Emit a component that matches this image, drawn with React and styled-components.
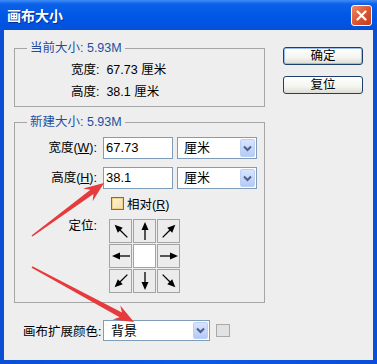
import React from 'react';
import styled, { createGlobalStyle } from 'styled-components';

const GlobalStyle = createGlobalStyle`
  body {
    margin: 0;
    background: #fff;
    font-family: "Liberation Sans", "Noto Sans CJK SC", sans-serif;
    font-size: 12px;
    color: #000;
  }
`;

const Window = styled.div`
  position: relative;
  width: 377px;
  height: 364px;
  display: flex;
  flex-direction: column;
  background: linear-gradient(90deg, #0a4fd6, #0b5ae6 50%, #0a4fd6);
  overflow: hidden;
`;

const TitleBar = styled.div`
  height: 30px;
  flex: none;
  display: flex;
  align-items: center;
  justify-content: space-between;
  padding: 0 5px 0 7px;
  background: linear-gradient(#3f8cf8 0, #0c61e8 4px, #0058e6 50%, #0251dc 100%);
`;

const Title = styled.span`
  font-family: "Noto Sans CJK SC", sans-serif;
  font-weight: bold;
  font-size: 14px;
  color: #fff;
  text-shadow: 1px 1px 0 #0a2a8c;
`;

const CloseButton = styled.div`
  width: 21px;
  height: 21px;
  box-sizing: border-box;
  border: 1px solid #fff;
  border-radius: 3px;
  background: linear-gradient(135deg, #f08a68, #d8532e 55%, #c0401e);
  display: flex;
  align-items: center;
  justify-content: center;
`;

const Body = styled.div`
  flex: 1;
  margin: 0 4px 4px;
  background: #eeeeee;
  display: grid;
  grid-template-columns: 251px 80px;
  column-gap: 18px;
  align-items: start;
  padding: 11px 10px 0;
`;

const Main = styled.div`
  display: flex;
  flex-direction: column;
`;

const Group = styled.fieldset`
  margin: 0 0 ${p => p.$gap || 0}px;
  padding: 0;
  border: 1px solid #a5a5a5;
  min-inline-size: 0;
`;

const Legend = styled.legend`
  margin-left: 12px;
  padding: 0 3px;
  line-height: 14px;
  font-size: 12.5px;
  color: #1f4e9e;
`;

const Info = styled.div`
  padding: 4px 0 3px 56px;
  line-height: 22px;
  font-size: 12.5px;
`;

const Form = styled.div`
  display: grid;
  grid-template-columns: 84px 70px 80px;
  column-gap: 4px;
  row-gap: 8px;
  padding: 8px 7px 9px 0;
`;

const FieldLabel = styled.label`
  text-align: right;
  padding-right: 2px;
  font-size: 12.5px;
  line-height: ${p => (p.$top ? '14px' : '22px')};
  align-self: ${p => (p.$top ? 'start' : 'center')};
  margin-top: ${p => (p.$top ? '1px' : '0')};
`;

const TextInput = styled.div`
  height: 22px;
  box-sizing: border-box;
  border: 1px solid #7f9db9;
  background: #fff;
  padding: 0 2px;
  font-size: 13px;
  line-height: 20px;
`;

const Select = styled.div`
  height: ${p => p.$h || 22}px;
  width: ${p => (p.$w ? `${p.$w}px` : 'auto')};
  box-sizing: border-box;
  border: 1px solid #7f9db9;
  background: #fff;
  display: flex;
  align-items: stretch;
  flex: none;
`;

const SelectText = styled.span`
  flex: 1;
  padding-left: ${p => p.$pad || 6}px;
  font-size: 13px;
  line-height: ${p => (p.$h || 22) - 2}px;
`;

const DropButton = styled.span`
  width: 15px;
  margin: 1px 1px 1px 0;
  box-sizing: border-box;
  border: 1px solid #bccff7;
  border-radius: 2px;
  background: linear-gradient(#d9e4fd, #b6caf6);
  display: flex;
  align-items: center;
  justify-content: center;
`;

const CheckRow = styled.div`
  grid-column: 2 / span 2;
  margin-left: 8px;
  display: flex;
  align-items: center;
  gap: 3px;
  height: 13px;
  font-size: 12.5px;
`;

const CheckBox = styled.span`
  width: 13px;
  height: 13px;
  box-sizing: border-box;
  border: 1px solid #6d6d6d;
  background: linear-gradient(135deg, #fbf3da, #f4dea0);
  box-shadow: inset 0 0 0 1px #f2cf88;
`;

const AnchorGrid = styled.div`
  grid-column: 2 / span 2;
  margin: 1px 0 0 6px;
  display: grid;
  grid-template-columns: repeat(3, 23px);
  grid-template-rows: repeat(3, 24px);
  gap: 1px;
`;

const AnchorCell = styled.div`
  box-sizing: border-box;
  border: 1px solid #a3a3a3;
  background: ${p => (p.$center ? '#fff' : '#ececec')};
  display: flex;
  align-items: center;
  justify-content: center;
`;

const ArrowIcon = styled.svg`
  transform: rotate(${p => p.$deg}deg);
  overflow: visible;
`;

const BottomRow = styled.div`
  margin-top: 17px;
  padding-left: 9px;
  display: flex;
  align-items: center;
  height: 21px;
`;

const BottomLabel = styled.span`
  width: 80px;
  flex: none;
  font-size: 12.5px;
`;

const Swatch = styled.span`
  width: 14px;
  height: 13px;
  margin-left: 6px;
  box-sizing: border-box;
  border: 1px solid #a8a8a8;
  background: #e2e2e2;
`;

const Side = styled.div`
  display: flex;
  flex-direction: column;
  gap: 11px;
  padding-top: 6px;
`;

const Button = styled.div`
  height: 18px;
  box-sizing: border-box;
  border: 1px solid #1c3f6e;
  border-radius: 3px;
  background: linear-gradient(#ffffff, #f4f4f0 60%, #dcdcd4);
  box-shadow: ${p => (p.$default ? 'inset 0 0 0 1px #9cbcec' : 'none')};
  text-align: center;
  line-height: 16px;
  font-size: 12.5px;
`;

const Overlay = styled.svg`
  position: absolute;
  left: 0;
  top: 0;
  pointer-events: none;
`;

const Chevron = () => (
  <svg width="9" height="7" viewBox="0 0 9 7">
    <polyline points="1,1.5 4.5,5 8,1.5" fill="none" stroke="#4a5f8a" strokeWidth="2" />
  </svg>
);

const Arrow = ({ deg }) => (
  <ArrowIcon $deg={deg} width="20" height="20" viewBox="0 0 20 20">
    <line x1="10" y1="19" x2="10" y2="6" stroke="#000" strokeWidth="1.3" />
    <polygon points="10,1 6.5,9 13.5,9" fill="#000" />
  </ArrowIcon>
);

// tapered annotation arrow from tail to tip
const arrowPoints = ([x1, y1], [x2, y2]) => {
  const dx = x2 - x1;
  const dy = y2 - y1;
  const len = Math.hypot(dx, dy);
  const ux = dx / len;
  const uy = dy / len;
  const nx = -uy;
  const ny = ux;
  const head = 20;
  const back = 15;
  const nk = [x2 - ux * head, y2 - uy * head];
  const bk = [x2 - ux * back, y2 - uy * back];
  const pts = [
    [x1 + nx * 0.8, y1 + ny * 0.8],
    [bk[0] + nx * 2.6, bk[1] + ny * 2.6],
    [nk[0] + nx * 8, nk[1] + ny * 8],
    [x2, y2],
    [nk[0] - nx * 8, nk[1] - ny * 8],
    [bk[0] - nx * 2.6, bk[1] - ny * 2.6],
    [x1 - nx * 0.8, y1 - ny * 0.8],
  ];
  return pts.map(p => p.map(v => v.toFixed(1)).join(',')).join(' ');
};

const anchors = [-45, 0, 45, -90, null, 90, -135, 180, 135];

const SizeSelect = ({ value, w, h, pad }) => (
  <Select $w={w} $h={h}>
    <SelectText $h={h} $pad={pad}>{value}</SelectText>
    <DropButton><Chevron /></DropButton>
  </Select>
);

export default function App() {
  return (
    <>
      <GlobalStyle />
      <Window>
        <TitleBar>
          <Title>画布大小</Title>
          <CloseButton>
            <svg width="11" height="11" viewBox="0 0 11 11">
              <path d="M1.5 1.5 L9.5 9.5 M9.5 1.5 L1.5 9.5" stroke="#fff" strokeWidth="2.2" strokeLinecap="round" />
            </svg>
          </CloseButton>
        </TitleBar>
        <Body>
          <Main>
            <Group $gap={8}>
              <Legend>当前大小: 5.93M</Legend>
              <Info>
                <div>宽度:&nbsp; 67.73 厘米</div>
                <div>高度:&nbsp; 38.1 厘米</div>
              </Info>
            </Group>
            <Group>
              <Legend>新建大小: 5.93M</Legend>
              <Form>
                <FieldLabel>宽度(<u>W</u>):</FieldLabel>
                <TextInput>67.73</TextInput>
                <SizeSelect value="厘米" />
                <FieldLabel>高度(<u>H</u>):</FieldLabel>
                <TextInput>38.1</TextInput>
                <SizeSelect value="厘米" />
                <div />
                <CheckRow>
                  <CheckBox />
                  <span>相对(<u>R</u>)</span>
                </CheckRow>
                <FieldLabel $top>定位:</FieldLabel>
                <AnchorGrid>
                  {anchors.map((deg, i) => (
                    <AnchorCell key={i} $center={deg === null}>
                      {deg !== null && <Arrow deg={deg} />}
                    </AnchorCell>
                  ))}
                </AnchorGrid>
              </Form>
            </Group>
            <BottomRow>
              <BottomLabel>画布扩展颜色:</BottomLabel>
              <SizeSelect value="背景" w={107} h={21} pad={7} />
              <Swatch />
            </BottomRow>
          </Main>
          <Side>
            <Button $default>确定</Button>
            <Button>复位</Button>
          </Side>
        </Body>
        <Overlay width="377" height="364" viewBox="0 0 377 364">
          <polygon points={arrowPoints([32, 236], [104, 183])} fill="#e63a3c" />
          <polygon points={arrowPoints([32, 267], [134, 322])} fill="#e63a3c" />
        </Overlay>
      </Window>
    </>
  );
}
